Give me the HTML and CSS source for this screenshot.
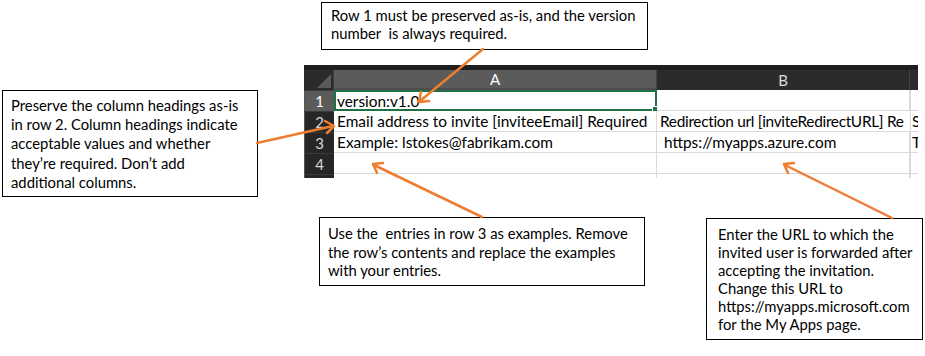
FILE: index.html
```html
<!DOCTYPE html>
<html>
<head>
<meta charset="utf-8">
<link rel="stylesheet" href="styles.css">
</head>
<body>
<div class="canvas">
  <div class="sheet">
    <div class="sheet-top"></div>
    <div class="grid">
      <div class="corner"><span class="tri"></span></div>
      <div class="colhead sel">A</div>
      <div class="colhead">B</div>
      <div class="colhead last"></div>

      <div class="rowhead sel">1</div>
      <div class="cell active">version:v1.0<span class="handle"></span></div>
      <div class="cell"></div>
      <div class="cell last"></div>

      <div class="rowhead">2</div>
      <div class="cell">Email address to invite [inviteeEmail] Required</div>
      <div class="cell tight">Redirection url [inviteRedirectURL] Re</div>
      <div class="cell last">S</div>

      <div class="rowhead">3</div>
      <div class="cell">Example: lstokes@fabrikam.com</div>
      <div class="cell pad">https://myapps.azure.com</div>
      <div class="cell last">T</div>

      <div class="rowhead">4</div>
      <div class="cell"></div>
      <div class="cell"></div>
      <div class="cell last"></div>

      <div class="rowhead"></div>
      <div class="cell"></div>
      <div class="cell"></div>
      <div class="cell last"></div>
    </div>
  </div>

  <div class="note note-top">Row 1 must be preserved as-is, and the version<br>number&nbsp; is always required.</div>
  <div class="note note-left">Preserve the column headings as-is<br>in row 2. Column headings indicate<br>acceptable values and whether<br>they’re required. Don’t add<br>additional columns.</div>
  <div class="note note-mid">Use the&nbsp; entries in row 3 as examples. Remove<br>the row’s contents and replace the examples<br>with your entries.</div>
  <div class="note note-right">Enter the URL to which the<br>invited user is forwarded after<br>accepting the invitation.<br>Change this URL to<br>https://myapps.microsoft.com<br>for the My Apps page.</div>

  <svg class="arrows" width="925" height="356" viewBox="0 0 925 356">
    <g stroke="#ED7D31" stroke-width="2.5" fill="none" stroke-linecap="round" stroke-linejoin="round">
      <line x1="483" y1="49" x2="420" y2="101"/>
      <polyline points="421,92 419,102 429,101"/>
      <line x1="257" y1="143" x2="333" y2="126"/>
      <polyline points="325,121 334,126 327,133"/>
      <line x1="482" y1="217" x2="374" y2="165"/>
      <polyline points="377,173 373,164 383,163"/>
      <line x1="892" y1="218" x2="785" y2="165"/>
      <polyline points="788,173 784,164 794,163"/>
    </g>
  </svg>
</div>
</body>
</html>
```
FILE: styles.css
```css
html, body {
  margin: 0;
  padding: 0;
  background: #ffffff;
}
.canvas {
  position: relative;
  width: 925px;
  height: 356px;
  overflow: hidden;
  font-family: Lato, "Liberation Sans", sans-serif;
}
.sheet {
  position: absolute;
  left: 304px;
  top: 65px;
  width: 614px;
  height: 113px;
  overflow: hidden;
  background: #1f1f1f;
  display: flex;
  flex-direction: column;
}
.sheet-top {
  height: 5px;
  background: #1f1f1f;
  flex: none;
}
.grid {
  display: grid;
  grid-template-columns: 30px 323px 253px 8px;
  grid-template-rows: 20px repeat(5, 21px);
  font-size: 15.4px;
}
.corner {
  background: #2b2b2b;
  position: relative;
  border-right: 1px solid #3c3c3c;
}
.tri {
  position: absolute;
  right: 2px;
  bottom: 2px;
  width: 0;
  height: 0;
  border-left: 14px solid transparent;
  border-bottom: 14px solid #5a5a5a;
}
.colhead {
  background: #2b2b2b;
  color: #dcdcdc;
  display: flex;
  align-items: center;
  justify-content: center;
  border-right: 1px solid #444;
  font-size: 15px;
}
.colhead.sel {
  background: #5b5b5b;
  color: #ffffff;
  border-bottom: 2px solid #4d4d4d;
}
.colhead.last {
  border-right: none;
}
.rowhead {
  background: #262626;
  color: #d8d8d8;
  display: flex;
  align-items: center;
  justify-content: center;
  border-top: 1px solid #3a3a3a;
  border-left: 1px solid #555;
  font-size: 15px;
}
.rowhead.sel {
  background: #5b5b5b;
  color: #ffffff;
}
.cell {
  background: #ffffff;
  color: #000;
  border-right: 1px solid #dadada;
  border-bottom: 1px solid #dadada;
  display: flex;
  align-items: center;
  padding-left: 3px;
  white-space: nowrap;
  overflow: hidden;
  position: relative;
  box-sizing: border-box;
}
.cell.tight {
  letter-spacing: -0.3px;
  border-right: none;
}
.cell.pad {
  padding-left: 7px;
}
.cell.last {
  border-right: none;
  border-left: 1px solid #dadada;
  padding-left: 1px;
}
.cell.active {
  border: 2px solid #1e7145;
  padding-left: 1px;
  overflow: visible;
}
.handle {
  position: absolute;
  right: -4px;
  bottom: -4px;
  width: 5px;
  height: 5px;
  background: #1e7145;
  border: 1px solid #fff;
}
.note {
  position: absolute;
  box-sizing: border-box;
  border: 1px solid #000;
  background: #ffffff;
  color: #000;
  font-size: 14.8px;
  white-space: nowrap;
}
.note-top {
  left: 321px;
  top: 2px;
  width: 327px;
  height: 48px;
  padding: 4px 0 0 9px;
  line-height: 17.5px;
}
.note-left {
  left: 2px;
  top: 90px;
  width: 256px;
  height: 107px;
  padding: 5px 0 0 8px;
  line-height: 19.2px;
}
.note-mid {
  left: 319px;
  top: 217px;
  width: 326px;
  height: 69px;
  padding: 6px 0 0 8px;
  line-height: 18.5px;
}
.note-right {
  left: 706px;
  top: 218px;
  width: 217px;
  height: 122px;
  padding: 6px 0 0 11px;
  line-height: 18px;
}
.arrows {
  position: absolute;
  left: 0;
  top: 0;
  pointer-events: none;
}
```
